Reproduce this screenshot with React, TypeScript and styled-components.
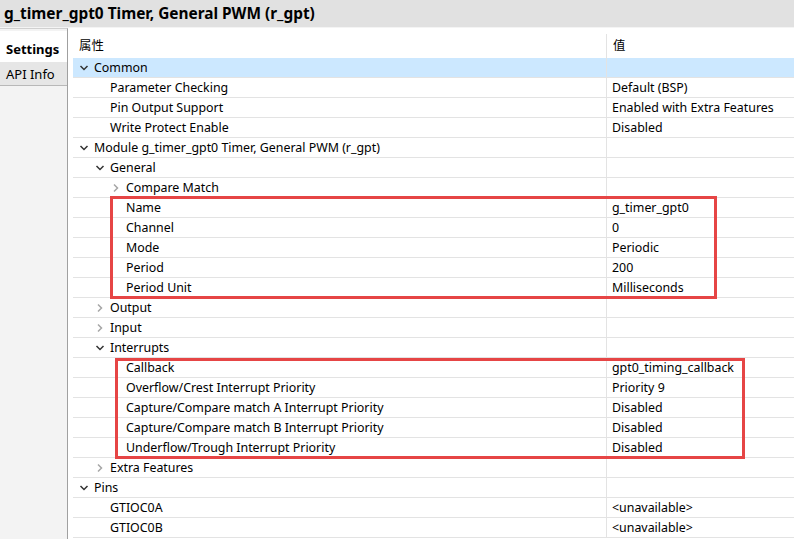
import React from 'react';
import styled, { createGlobalStyle } from 'styled-components';

type Row = {
    label: string;
    value?: string;
    level: number;
    kind: 'open' | 'closed' | 'leaf';
    selected?: boolean;
};

const rowsTop: Row[] = [
    { label: 'Common', level: 0, kind: 'open', selected: true },
    { label: 'Parameter Checking', value: 'Default (BSP)', level: 1, kind: 'leaf' },
    { label: 'Pin Output Support', value: 'Enabled with Extra Features', level: 1, kind: 'leaf' },
    { label: 'Write Protect Enable', value: 'Disabled', level: 1, kind: 'leaf' },
    { label: 'Module g_timer_gpt0 Timer, General PWM (r_gpt)', level: 0, kind: 'open' },
    { label: 'General', level: 1, kind: 'open' },
    { label: 'Compare Match', level: 2, kind: 'closed' },
];

const rowsGeneral: Row[] = [
    { label: 'Name', value: 'g_timer_gpt0', level: 2, kind: 'leaf' },
    { label: 'Channel', value: '0', level: 2, kind: 'leaf' },
    { label: 'Mode', value: 'Periodic', level: 2, kind: 'leaf' },
    { label: 'Period', value: '200', level: 2, kind: 'leaf' },
    { label: 'Period Unit', value: 'Milliseconds', level: 2, kind: 'leaf' },
];

const rowsMiddle: Row[] = [
    { label: 'Output', level: 1, kind: 'closed' },
    { label: 'Input', level: 1, kind: 'closed' },
    { label: 'Interrupts', level: 1, kind: 'open' },
];

const rowsInterrupts: Row[] = [
    { label: 'Callback', value: 'gpt0_timing_callback', level: 2, kind: 'leaf' },
    { label: 'Overflow/Crest Interrupt Priority', value: 'Priority 9', level: 2, kind: 'leaf' },
    { label: 'Capture/Compare match A Interrupt Priority', value: 'Disabled', level: 2, kind: 'leaf' },
    { label: 'Capture/Compare match B Interrupt Priority', value: 'Disabled', level: 2, kind: 'leaf' },
    { label: 'Underflow/Trough Interrupt Priority', value: 'Disabled', level: 2, kind: 'leaf' },
];

const rowsBottom: Row[] = [
    { label: 'Extra Features', level: 1, kind: 'closed' },
    { label: 'Pins', level: 0, kind: 'open' },
    { label: 'GTIOC0A', value: '<unavailable>', level: 1, kind: 'leaf' },
    { label: 'GTIOC0B', value: '<unavailable>', level: 1, kind: 'leaf' },
];

const Chevron = ({ open }: { open: boolean }) =>
    open ? (
        <svg width="10" height="10" viewBox="0 0 10 10">
            <polyline points="1.5,3 5,6.5 8.5,3" fill="none" stroke="#333333" strokeWidth="1.5" />
        </svg>
    ) : (
        <svg width="10" height="10" viewBox="0 0 10 10">
            <polyline points="3,1.5 6.5,5 3,8.5" fill="none" stroke="#a6a6a6" strokeWidth="1.5" />
        </svg>
    );

const TreeRow = ({ row }: { row: Row }) => (
    <RowWrapper $selected={row.selected}>
        <NameCell $level={row.level}>
            {row.kind !== 'leaf' && (
                <ChevronBox>
                    <Chevron open={row.kind === 'open'} />
                </ChevronBox>
            )}
            <span>{row.label}</span>
        </NameCell>
        <ValueCell>{row.value}</ValueCell>
    </RowWrapper>
);

const App = () => {
    return (
        <Page>
            <GlobalStyle />
            <TitleBar>g_timer_gpt0 Timer, General PWM (r_gpt)</TitleBar>
            <Body>
                <SideBar>
                    <Tab $active>Settings</Tab>
                    <Tab>API Info</Tab>
                </SideBar>
                <Tree>
                    <HeaderRow>
                        <HeaderName>属性</HeaderName>
                        <HeaderValue>值</HeaderValue>
                    </HeaderRow>
                    {rowsTop.map((r) => <TreeRow key={r.label} row={r} />)}
                    <Group>
                        {rowsGeneral.map((r) => <TreeRow key={r.label} row={r} />)}
                        <RedBox $left={37} $top={-2} $right={77} $bottom={-1} />
                    </Group>
                    {rowsMiddle.map((r) => <TreeRow key={r.label} row={r} />)}
                    <Group>
                        {rowsInterrupts.map((r) => <TreeRow key={r.label} row={r} />)}
                        <RedBox $left={42} $top={0} $right={49} $bottom={-1} />
                    </Group>
                    {rowsBottom.map((r) => <TreeRow key={r.label} row={r} />)}
                </Tree>
            </Body>
        </Page>
    );
};

export default App;

const GlobalStyle = createGlobalStyle`
    html, body {
        margin: 0;
        padding: 0;
        background: #ffffff;
    }
    body {
        font-family: 'Noto Sans', 'Noto Sans CJK SC', sans-serif;
        font-size: 12.4px;
        color: #000000;
    }
`;

const Page = styled.div`
    width: 794px;
    height: 539px;
    display: flex;
    flex-direction: column;
    overflow: hidden;
`;

const TitleBar = styled.div`
    height: 27px;
    background: #e1e1e1;
    border-bottom: 1px solid #f4f4f4;
    padding-left: 4px;
    display: flex;
    align-items: center;
    font-size: 15.4px;
    font-weight: 700;
    color: #000000;
`;

const Body = styled.div`
    flex: 1;
    display: flex;
    min-height: 0;
`;

const SideBar = styled.div`
    width: 67px;
    background: #f3f3f3;
    border-right: 1px solid #a0a0a0;
    border-top: 1px solid #d0d0d0;
    padding-top: 2px;
    display: flex;
    flex-direction: column;
`;

const Tab = styled.div<{ $active?: boolean }>`
    height: ${(p) => (p.$active ? '31px' : '24px')};
    box-sizing: border-box;
    display: flex;
    align-items: ${(p) => (p.$active ? 'flex-end' : 'center')};
    padding-left: 6px;
    padding-bottom: ${(p) => (p.$active ? '3px' : '0')};
    background: ${(p) => (p.$active ? '#ffffff' : '#e6e6e6')};
    border-bottom: 1px solid ${(p) => (p.$active ? 'transparent' : '#b8b8b8')};
    font-weight: ${(p) => (p.$active ? 700 : 400)};
    font-size: 13px;
`;

const Tree = styled.div`
    flex: 1;
    padding-left: 5px;
    padding-top: 3px;
    display: flex;
    flex-direction: column;
`;

const HeaderRow = styled.div`
    height: 27px;
    display: flex;
    align-items: stretch;
`;

const HeaderName = styled.div`
    width: 527px;
    padding-left: 6px;
    display: flex;
    align-items: center;
`;

const HeaderValue = styled.div`
    flex: 1;
    margin-top: 3px;
    border-left: 1px solid #e3e3e3;
    padding-left: 6px;
    display: flex;
    align-items: center;
    padding-bottom: 3px;
`;

const Group = styled.div`
    position: relative;
`;

const RedBox = styled.div<{ $left: number; $top: number; $right: number; $bottom: number }>`
    position: absolute;
    left: ${(p) => p.$left}px;
    top: ${(p) => p.$top}px;
    right: ${(p) => p.$right}px;
    bottom: ${(p) => p.$bottom}px;
    border: 3px solid #e64545;
    pointer-events: none;
`;

const RowWrapper = styled.div<{ $selected?: boolean }>`
    height: 20px;
    box-sizing: border-box;
    display: flex;
    background: ${(p) => (p.$selected ? '#cce8ff' : 'transparent')};
    border-bottom: 1px solid #e3e3e3;
`;

const NameCell = styled.div<{ $level: number }>`
    width: 533px;
    box-sizing: border-box;
    padding-left: ${(p) => 21 + p.$level * 16}px;
    position: relative;
    display: flex;
    align-items: center;
    white-space: nowrap;
`;

const ChevronBox = styled.span`
    position: absolute;
    margin-left: -15px;
    width: 10px;
    height: 10px;
    display: flex;
`;

const ValueCell = styled.div`
    flex: 1;
    border-left: 1px solid #e3e3e3;
    padding-left: 5px;
    display: flex;
    align-items: center;
    white-space: nowrap;
`;
